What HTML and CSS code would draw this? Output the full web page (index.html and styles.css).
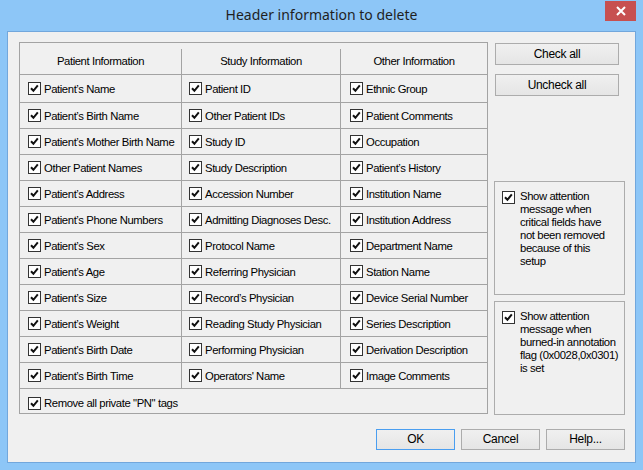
FILE: index.html
```html
<!DOCTYPE html>
<html lang="en">

<head>
    <meta charset="UTF-8">
    <meta name="viewport" content="width=device-width, initial-scale=1.0">
    <title>Header information to delete</title>
    <link rel="stylesheet" href="styles.css">
</head>

<body>
    <svg class="defs" width="0" height="0">
        <symbol id="chk" viewBox="0 0 11 11">
            <path d="M2 5.3 L4.4 7.8 L8.8 2.4" fill="none" stroke="#111" stroke-width="2"/>
        </symbol>
    </svg>

    <div class="window">
        <div class="titlebar">
            <span></span>
            <span class="title">Header information to delete</span>
            <span class="close">
                <svg width="10" height="10" viewBox="0 0 10 10">
                    <path d="M1 1 L9 9 M9 1 L1 9" stroke="#fff" stroke-width="2"/>
                </svg>
            </span>
        </div>

        <div class="client">
            <div class="main">
                <div class="fields">
                    <div class="grid">
                        <div class="head">Patient Information</div>
                        <div class="head">Study Information</div>
                        <div class="head">Other Information</div>

                        <div class="cell"><span class="cb"><svg><use href="#chk"/></svg></span>Patient’s Name</div>
                        <div class="cell"><span class="cb"><svg><use href="#chk"/></svg></span>Patient ID</div>
                        <div class="cell"><span class="cb"><svg><use href="#chk"/></svg></span>Ethnic Group</div>

                        <div class="cell"><span class="cb"><svg><use href="#chk"/></svg></span>Patient’s Birth Name</div>
                        <div class="cell"><span class="cb"><svg><use href="#chk"/></svg></span>Other Patient IDs</div>
                        <div class="cell"><span class="cb"><svg><use href="#chk"/></svg></span>Patient Comments</div>

                        <div class="cell"><span class="cb"><svg><use href="#chk"/></svg></span>Patient’s Mother Birth Name</div>
                        <div class="cell"><span class="cb"><svg><use href="#chk"/></svg></span>Study ID</div>
                        <div class="cell"><span class="cb"><svg><use href="#chk"/></svg></span>Occupation</div>

                        <div class="cell"><span class="cb"><svg><use href="#chk"/></svg></span>Other Patient Names</div>
                        <div class="cell"><span class="cb"><svg><use href="#chk"/></svg></span>Study Description</div>
                        <div class="cell"><span class="cb"><svg><use href="#chk"/></svg></span>Patient’s History</div>

                        <div class="cell"><span class="cb"><svg><use href="#chk"/></svg></span>Patient’s Address</div>
                        <div class="cell"><span class="cb"><svg><use href="#chk"/></svg></span>Accession Number</div>
                        <div class="cell"><span class="cb"><svg><use href="#chk"/></svg></span>Institution Name</div>

                        <div class="cell"><span class="cb"><svg><use href="#chk"/></svg></span>Patient’s Phone Numbers</div>
                        <div class="cell"><span class="cb"><svg><use href="#chk"/></svg></span>Admitting Diagnoses Desc.</div>
                        <div class="cell"><span class="cb"><svg><use href="#chk"/></svg></span>Institution Address</div>

                        <div class="cell"><span class="cb"><svg><use href="#chk"/></svg></span>Patient’s Sex</div>
                        <div class="cell"><span class="cb"><svg><use href="#chk"/></svg></span>Protocol Name</div>
                        <div class="cell"><span class="cb"><svg><use href="#chk"/></svg></span>Department Name</div>

                        <div class="cell"><span class="cb"><svg><use href="#chk"/></svg></span>Patient’s Age</div>
                        <div class="cell"><span class="cb"><svg><use href="#chk"/></svg></span>Referring Physician</div>
                        <div class="cell"><span class="cb"><svg><use href="#chk"/></svg></span>Station Name</div>

                        <div class="cell"><span class="cb"><svg><use href="#chk"/></svg></span>Patient’s Size</div>
                        <div class="cell"><span class="cb"><svg><use href="#chk"/></svg></span>Record’s Physician</div>
                        <div class="cell"><span class="cb"><svg><use href="#chk"/></svg></span>Device Serial Number</div>

                        <div class="cell"><span class="cb"><svg><use href="#chk"/></svg></span>Patient’s Weight</div>
                        <div class="cell"><span class="cb"><svg><use href="#chk"/></svg></span>Reading Study Physician</div>
                        <div class="cell"><span class="cb"><svg><use href="#chk"/></svg></span>Series Description</div>

                        <div class="cell"><span class="cb"><svg><use href="#chk"/></svg></span>Patient’s Birth Date</div>
                        <div class="cell"><span class="cb"><svg><use href="#chk"/></svg></span>Performing Physician</div>
                        <div class="cell"><span class="cb"><svg><use href="#chk"/></svg></span>Derivation Description</div>

                        <div class="cell"><span class="cb"><svg><use href="#chk"/></svg></span>Patient’s Birth Time</div>
                        <div class="cell"><span class="cb"><svg><use href="#chk"/></svg></span>Operators' Name</div>
                        <div class="cell"><span class="cb"><svg><use href="#chk"/></svg></span>Image Comments</div>
                    </div>
                    <div class="extra"><span class="cb"><svg><use href="#chk"/></svg></span>Remove all private "PN" tags</div>
                </div>

                <div class="side">
                    <div class="btn wide">Check all</div>
                    <div class="btn wide">Uncheck all</div>
                    <div class="group first">
                        <span class="cb"><svg><use href="#chk"/></svg></span>
                        <span class="gtext">Show attention<br>message when<br>critical fields have<br>not been removed<br>because of this<br>setup</span>
                    </div>
                    <div class="group">
                        <span class="cb"><svg><use href="#chk"/></svg></span>
                        <span class="gtext">Show attention<br>message when<br>burned-in annotation<br>flag (0x0028,0x0301)<br>is set</span>
                    </div>
                </div>
            </div>

            <div class="actions">
                <div class="btn default">OK</div>
                <div class="btn">Cancel</div>
                <div class="btn">Help...</div>
            </div>
        </div>
    </div>
</body>

</html>
```

FILE: styles.css
```css
* {
    padding: 0;
    margin: 0;
    box-sizing: border-box;
}

body {
    background-color: #8dc6f7;
    font-family: "Liberation Sans", Arial, sans-serif;
    font-size: 11.3px;
    letter-spacing: -0.4px;
    color: #000;
}

.defs {
    position: absolute;
}

.window {
    width: 643px;
    height: 470px;
    display: flex;
    flex-direction: column;
    background-color: #8dc6f7;
}

/* 标题栏 */
.titlebar {
    height: 31px;
    display: grid;
    grid-template-columns: 1fr auto 1fr;
}

.title {
    font-family: "Noto Sans", sans-serif;
    font-size: 14px;
    letter-spacing: 0;
    color: #1f1f1f;
    line-height: 30px;
}

.close {
    justify-self: end;
    width: 31px;
    height: 20px;
    margin: 1px 7px 0 0;
    background-color: #c75050;
    display: flex;
    justify-content: center;
    align-items: center;
}

.client {
    flex: 1;
    margin: 0 7px 7px;
    border: 1px solid #72a7dc;
    background-color: #f0f0f0;
    padding: 10px 10px 0 11px;
}

.main {
    display: flex;
    gap: 6px;
    height: 373px;
}

/* 左边表格 */
.fields {
    width: 469px;
    height: 372px;
    border: 1px solid #a3a3a3;
}

.grid {
    display: grid;
    grid-template-columns: 162px 159px 146px;
    grid-template-rows: 32px 28px repeat(11, 26px);
}

.head {
    margin-top: 6px;
    border-bottom: 1px solid #a3a3a3;
    text-align: center;
    line-height: 25px;
}

.cell {
    display: flex;
    align-items: center;
    border-bottom: 1px solid #a3a3a3;
    padding-left: 8px;
    white-space: nowrap;
}

.head:nth-child(3n+1),
.head:nth-child(3n+2),
.cell:nth-child(3n+1),
.cell:nth-child(3n+2) {
    border-right: 1px solid #a3a3a3;
}

.cell:nth-child(3n+2) {
    padding-left: 7px;
}

.cell:nth-child(3n) {
    padding-left: 9px;
}

.extra {
    display: flex;
    align-items: center;
    height: 23px;
    padding: 5px 0 0 8px;
}

.cb {
    flex: none;
    width: 13px;
    height: 13px;
    border: 1px solid #333;
    background-color: #fff;
    margin-right: 3px;
}

.cb svg {
    display: block;
    width: 11px;
    height: 11px;
}

/* 右边按钮和选项 */
.side {
    width: 131px;
    display: flex;
    flex-direction: column;
}

.btn {
    height: 21px;
    border: 1px solid #acacac;
    background: linear-gradient(#f0f0f0, #e5e5e5);
    text-align: center;
    line-height: 19px;
    font-size: 12px;
    letter-spacing: -0.3px;
}

.btn.wide {
    width: 124px;
    height: 22px;
    line-height: 20px;
    margin: 1px 0 0 1px;
}

.btn.wide + .btn.wide {
    margin-top: 9px;
}

.group {
    height: 114px;
    margin-top: 6px;
    border: 1px solid #acacac;
    display: flex;
    align-items: flex-start;
    padding: 9px 0 0 7px;
}

.group.first {
    margin-top: 85px;
}

.group .cb {
    margin: 0 5px 0 0;
}

.gtext {
    white-space: nowrap;
    line-height: 13px;
    margin-top: -1px;
}

.actions {
    display: flex;
    justify-content: flex-end;
    gap: 6px;
    margin-top: 14px;
}

.actions .btn {
    width: 79px;
}

.btn.default {
    border-color: #4a9ef0;
}
```
